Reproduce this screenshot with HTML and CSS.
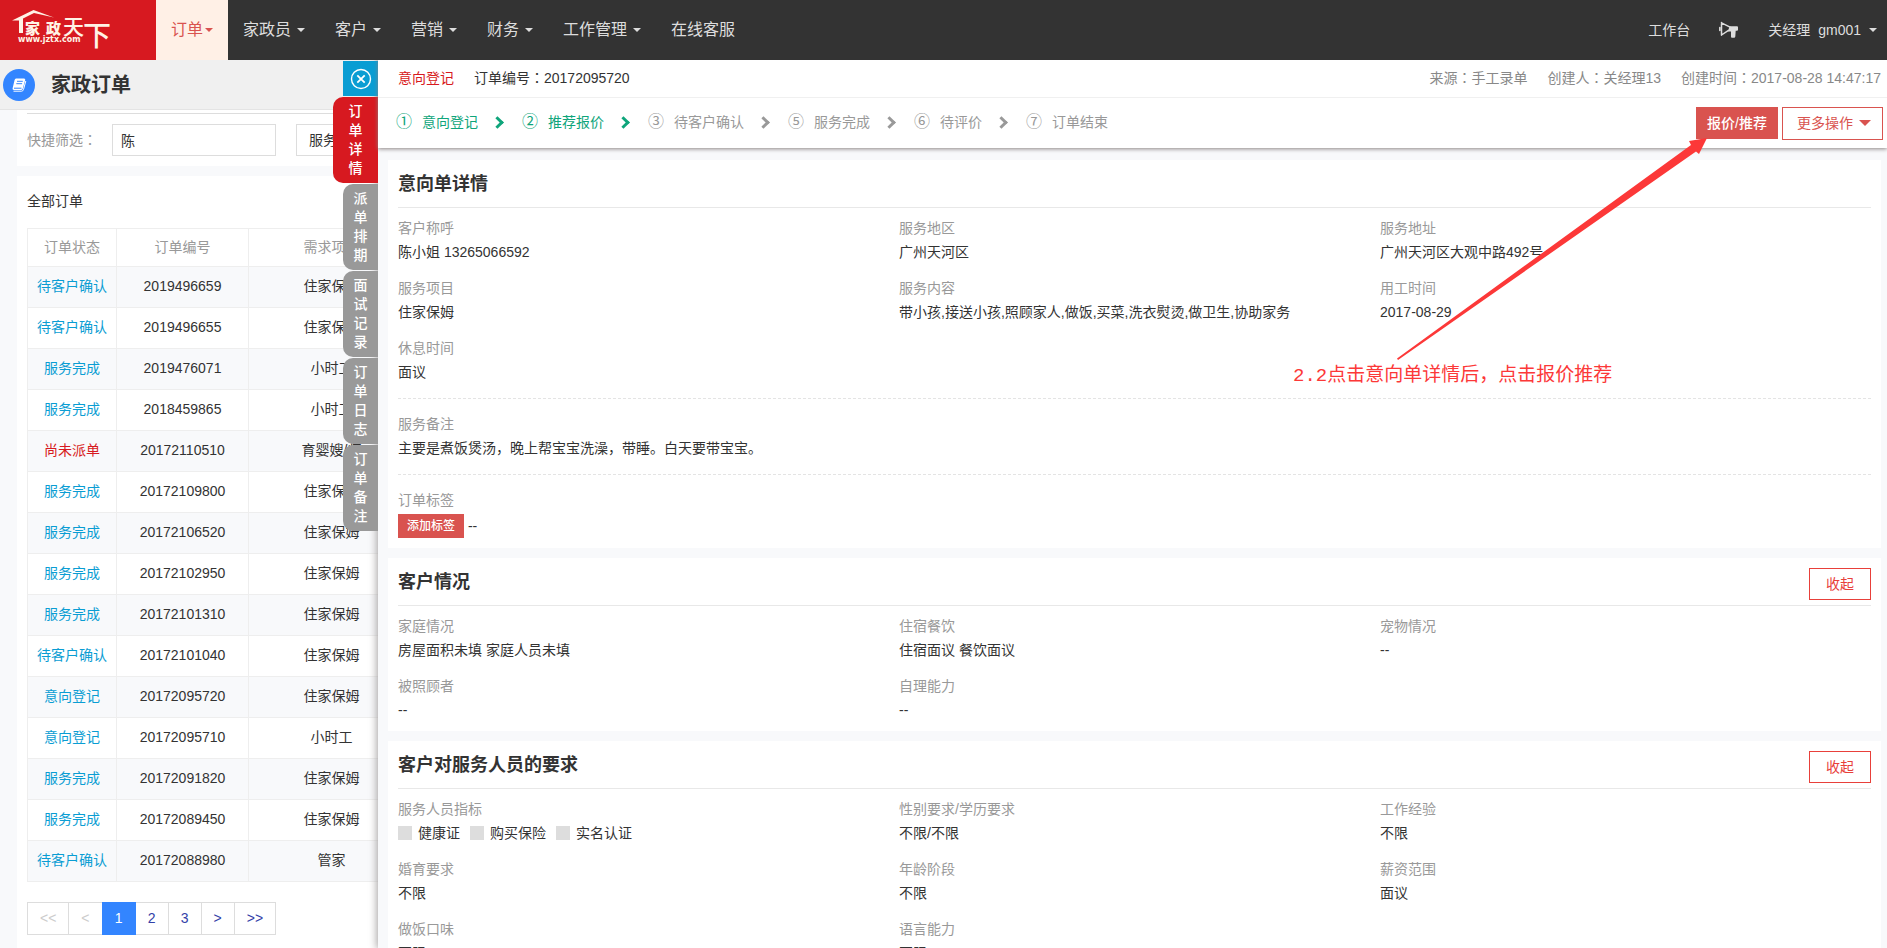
FILE: index.html
```html
<!DOCTYPE html>
<html lang="zh-CN">
<head>
<meta charset="utf-8">
<title>家政订单</title>
<link rel="stylesheet" href="styles.css">
</head>
<body>
<header class="topbar">
  <a class="logo" href="#" aria-label="家政天下">
    <svg viewBox="0 0 156 60" width="156" height="60">
      <path d="M12 20.500 33.500 10 54 17.500 34 13 23 18.500 23 33H19V20.500z" fill="#fff3e6"/>
      <text class="logo-word" x="25" y="34" font-size="15">家</text>
      <text class="logo-word" x="46" y="34" font-size="15">政</text>
      <text class="logo-brush" x="63" y="34" font-size="21">天</text>
      <text class="logo-brush" x="83" y="46" font-size="28">下</text>
      <text class="logo-url" x="18" y="42" font-size="8">www.jztx.com</text>
    </svg>
  </a>
  <nav class="menu">
    <a class="menu-item active" href="#">订单<i class="caret"></i></a>
    <a class="menu-item" href="#">家政员<i class="caret"></i></a>
    <a class="menu-item" href="#">客户<i class="caret"></i></a>
    <a class="menu-item" href="#">营销<i class="caret"></i></a>
    <a class="menu-item" href="#">财务<i class="caret"></i></a>
    <a class="menu-item" href="#">工作管理<i class="caret"></i></a>
    <a class="menu-item" href="#">在线客服</a>
  </nav>
  <div class="account">
    <a href="#">工作台</a>
    <a class="horn" href="#" aria-label="公告">
      <svg viewBox="0 0 20 18" width="20" height="18">
        <path d="M2.500 1.800 11.500 6.300M2.500 14 9.500 9.300M2.500 1.500V14.200M.8 6.500V9.500" fill="none" stroke="#ddd" stroke-width="1.500" stroke-linecap="round"/>
        <path d="M10.500 5.200H18Q19 5.200 19 6.200V8.800Q19 9.800 18 9.800H16.700L16.300 15.500Q16.200 16.700 15 16.700H13Q11.900 16.700 12 15.500V10.500H9z" fill="#ddd"/>
      </svg>
    </a>
    <a class="user" href="#"><span>关经理</span><span>gm001</span><i class="caret"></i></a>
  </div>
</header>

<div class="workspace">
  <main class="orders">
    <div class="page-title">
      <span class="page-icon">
        <svg viewBox="0 0 16 14" width="16" height="14">
          <path d="M5 .5H13Q14.600.5 14.200 2L11.800 10.500Q11.400 12 10 12H2.800Q1.200 12 1.600 10.300L3.600 2Q4 .5 5 .5z" fill="#fff"/>
          <path d="M6 3.300H11.800M5.300 5.700H11.100" stroke="#3385ff" stroke-width="1"/>
          <path d="M14.800 3 12.500 11.500Q12 13.200 10.500 13.200H2.500" fill="none" stroke="#fff" stroke-width="1"/>
          <path d="M3 10.200H10.500" stroke="#3385ff" stroke-width="1"/>
        </svg>
      </span>
      <h1>家政订单</h1>
    </div>
    <section class="panel filters">
      <form class="filter-row">
        <label for="quick">快捷筛选<span class="colon" lang="zh-Hant">：</span></label>
        <input id="quick" type="text" value="陈">
        <select aria-label="服务"><option>服务</option></select>
      </form>
    </section>
    <section class="panel list">
      <h2>全部订单</h2>
      <table>
        <colgroup><col class="c-state"><col class="c-number"><col class="c-item"></colgroup>
        <thead><tr><th>订单状态</th><th>订单编号</th><th>需求项目</th></tr></thead>
        <tbody>
          <tr><td><a href="#">待客户确认</a></td><td>2019496659</td><td>住家保姆</td></tr>
          <tr><td><a href="#">待客户确认</a></td><td>2019496655</td><td>住家保姆</td></tr>
          <tr><td><a href="#">服务完成</a></td><td>2019476071</td><td>小时工</td></tr>
          <tr><td><a href="#">服务完成</a></td><td>2018459865</td><td>小时工</td></tr>
          <tr><td><a class="alert" href="#">尚未派单</a></td><td>20172110510</td><td>育婴嫂/师</td></tr>
          <tr><td><a href="#">服务完成</a></td><td>20172109800</td><td>住家保姆</td></tr>
          <tr><td><a href="#">服务完成</a></td><td>20172106520</td><td>住家保姆</td></tr>
          <tr><td><a href="#">服务完成</a></td><td>20172102950</td><td>住家保姆</td></tr>
          <tr><td><a href="#">服务完成</a></td><td>20172101310</td><td>住家保姆</td></tr>
          <tr><td><a href="#">待客户确认</a></td><td>20172101040</td><td>住家保姆</td></tr>
          <tr><td><a href="#">意向登记</a></td><td>20172095720</td><td>住家保姆</td></tr>
          <tr><td><a href="#">意向登记</a></td><td>20172095710</td><td>小时工</td></tr>
          <tr><td><a href="#">服务完成</a></td><td>20172091820</td><td>住家保姆</td></tr>
          <tr><td><a href="#">服务完成</a></td><td>20172089450</td><td>住家保姆</td></tr>
          <tr><td><a href="#">待客户确认</a></td><td>20172088980</td><td>管家</td></tr>
        </tbody>
      </table>
      <nav class="pager" aria-label="分页">
        <a class="off" href="#">&lt;&lt;</a><a class="off" href="#">&lt;</a><a class="current" href="#">1</a><a href="#">2</a><a href="#">3</a><a href="#">&gt;</a><a href="#">&gt;&gt;</a>
      </nav>
    </section>
  </main>

  <aside class="drawer">
    <div class="side-tabs">
      <button class="close" type="button" aria-label="关闭">
        <svg viewBox="0 0 22 22" width="22" height="22" fill="none" stroke="#fff">
          <circle cx="11" cy="11" r="9.500" stroke-width="1.400"/>
          <path d="M7.300 7.300 14.700 14.700M14.700 7.300 7.300 14.700" stroke-width="1.800"/>
        </svg>
      </button>
      <button class="tab selected" type="button">订单详情</button>
      <button class="tab" type="button">派单排期</button>
      <button class="tab" type="button">面试记录</button>
      <button class="tab" type="button">订单日志</button>
      <button class="tab" type="button">订单备注</button>
    </div>

    <div class="drawer-head">
      <div class="meta">
        <span class="state">意向登记</span>
        <span class="number">订单编号<span class="colon" lang="zh-Hant">：</span>20172095720</span>
        <span class="push">来源<span class="colon" lang="zh-Hant">：</span>手工录单</span>
        <span>创建人<span class="colon" lang="zh-Hant">：</span>关经理13</span>
        <span>创建时间<span class="colon" lang="zh-Hant">：</span>2017-08-28 14:47:17</span>
      </div>
      <div class="progress">
        <ol class="steps">
          <li class="done"><span class="no">①</span>意向登记</li>
          <li class="done"><span class="no">②</span>推荐报价</li>
          <li><span class="no">③</span>待客户确认</li>
          <li><span class="no">⑤</span>服务完成</li>
          <li><span class="no">⑥</span>待评价</li>
          <li><span class="no">⑦</span>订单结束</li>
        </ol>
        <button class="btn-solid" type="button">报价/推荐</button>
        <button class="btn-line more" type="button">更多操作<i class="caret large"></i></button>
      </div>
    </div>

    <div class="drawer-body">
      <section class="card">
        <div class="card-head"><h3>意向单详情</h3></div>
        <dl class="fields">
          <div><dt>客户称呼</dt><dd>陈小姐 13265066592</dd></div>
          <div><dt>服务地区</dt><dd>广州天河区</dd></div>
          <div><dt>服务地址</dt><dd>广州天河区大观中路492号</dd></div>
          <div><dt>服务项目</dt><dd>住家保姆</dd></div>
          <div><dt>服务内容</dt><dd>带小孩,接送小孩,照顾家人,做饭,买菜,洗衣熨烫,做卫生,协助家务</dd></div>
          <div><dt>用工时间</dt><dd>2017-08-29</dd></div>
          <div><dt>休息时间</dt><dd>面议</dd></div>
        </dl>
        <dl class="fields single">
          <div><dt>服务备注</dt><dd>主要是煮饭煲汤，晚上帮宝宝洗澡，带睡。白天要带宝宝。</dd></div>
        </dl>
        <dl class="fields single">
          <div><dt>订单标签</dt><dd class="tags"><button class="btn-tag" type="button">添加标签</button> --</dd></div>
        </dl>
      </section>

      <section class="card">
        <div class="card-head"><h3>客户情况</h3><button class="btn-line fold" type="button">收起</button></div>
        <dl class="fields">
          <div><dt>家庭情况</dt><dd>房屋面积未填 家庭人员未填</dd></div>
          <div><dt>住宿餐饮</dt><dd>住宿面议 餐饮面议</dd></div>
          <div><dt>宠物情况</dt><dd>--</dd></div>
          <div><dt>被照顾者</dt><dd>--</dd></div>
          <div><dt>自理能力</dt><dd>--</dd></div>
        </dl>
      </section>

      <section class="card">
        <div class="card-head"><h3>客户对服务人员的要求</h3><button class="btn-line fold" type="button">收起</button></div>
        <dl class="fields">
          <div><dt>服务人员指标</dt><dd class="checks"><label><input type="checkbox">健康证</label><label><input type="checkbox">购买保险</label><label><input type="checkbox">实名认证</label></dd></div>
          <div><dt>性别要求/学历要求</dt><dd>不限/不限</dd></div>
          <div><dt>工作经验</dt><dd>不限</dd></div>
          <div><dt>婚育要求</dt><dd>不限</dd></div>
          <div><dt>年龄阶段</dt><dd>不限</dd></div>
          <div><dt>薪资范围</dt><dd>面议</dd></div>
          <div><dt>做饭口味</dt><dd>不限</dd></div>
          <div><dt>语言能力</dt><dd>不限</dd></div>
        </dl>
      </section>
    </div>

    <div class="callout">
      <svg viewBox="0 0 314 222" width="314" height="222" aria-hidden="true">
        <path d="M314 0 306 16 303 13.500 5 222 4 220.500 298 7 296 3z" fill="#fc3838"/>
      </svg>
      <p>2.2点击意向单详情后，点击报价推荐</p>
    </div>
  </aside>
</div>
</body>
</html>
```
FILE: styles.css
```css
*, *::before, *::after { box-sizing: border-box; }

html, body { height: 100%; }

body {
  margin: 0;
  display: flex;
  flex-direction: column;
  overflow: hidden;
  background: #f8f9fb;
  color: #333;
  font: 14px/24px "Liberation Sans", "Noto Sans CJK SC", sans-serif;
}

h1, h2, h3, p, dl, dd, ol { margin: 0; padding: 0; }
a { color: inherit; text-decoration: none; }
button, input, select { font: inherit; color: inherit; border-radius: 0; }
button { padding: 0; border: 0; cursor: pointer; }
svg { display: block; }

.colon { font-family: "Noto Sans CJK TC", sans-serif; line-height: 1; }

.caret {
  border: 4px solid transparent;
  border-top-color: currentColor;
  border-bottom: 0;
}
.caret.large { border-width: 6px; border-bottom: 0; }

/* top bar */
.topbar {
  display: flex;
  flex: none;
  height: 60px;
  background: #333;
  color: #ddd;
}
.logo { flex: none; background: #d71920; }
.logo text { fill: #fff3e6; }
.logo-word { font-weight: 900; }
.logo-brush { font-weight: 500; }
.logo-url { font-family: "DejaVu Sans", sans-serif; font-weight: 700; }
.menu { display: flex; font-size: 16px; }
.menu-item {
  display: flex;
  align-items: center;
  gap: 6px;
  padding: 0 15px;
}
.menu-item.active { gap: 2px; background: #fff0e6; color: #d9534f; }
.account {
  display: flex;
  align-items: center;
  gap: 29px;
  margin-left: auto;
  padding-right: 10px;
}
.user { display: flex; align-items: center; gap: 8px; }

/* order list behind the drawer */
.workspace { position: relative; flex: 1; min-height: 0; }
.orders { height: 100%; overflow: hidden; }
.page-title {
  display: flex;
  align-items: center;
  gap: 16px;
  height: 50px;
  padding: 0 3px;
  background: #f0f0f0;
  border-bottom: 1px solid #e4e4e4;
}
.page-title h1 { font-size: 20px; }
.page-icon {
  display: grid;
  place-items: center;
  width: 32px;
  height: 32px;
  border-radius: 50%;
  background: #3385ff;
}
.panel { margin: 0 17px 10px; padding: 0 10px; background: #fff; }
.filters { padding-top: 3px; padding-bottom: 10px; }
.filter-row {
  display: flex;
  align-items: center;
  padding-top: 10px;
  border-top: 1px solid #ddd;
}
.filter-row label { width: 85px; color: #999; }
.filter-row input {
  width: 164px;
  height: 32px;
  margin-right: 20px;
  padding: 0 8px;
  border: 1px solid #ddd;
}
.filter-row select {
  width: 120px;
  height: 32px;
  padding: 0 12px;
  border: 1px solid #ddd;
  background: #fff;
  appearance: none;
}
.list h2 { padding: 13px 0 15px; font-size: 14px; font-weight: 400; }
.list { padding-bottom: 40px; }
table { border-collapse: collapse; table-layout: fixed; width: 387px; }
.c-state { width: 89px; }
.c-number { width: 132px; }
.c-item { width: 166px; }
th, td { height: 41px; padding: 0 0 2px; border: 1px solid #eee; text-align: center; }
th { height: 38px; color: #999; font-weight: 400; }
tbody tr:nth-child(odd) { background: #f8f9fb; }
td a { color: #0a9dd3; }
td a.alert { color: #d71920; }
.pager { display: flex; padding-top: 20px; }
.pager a {
  min-width: 34px;
  margin-right: -1px;
  padding: 3px 12px 4px;
  border: 1px solid #ddd;
  color: #3341a8;
  text-align: center;
}
.pager a.off { color: #ccc; }
.pager a:first-child, .pager a:last-child { min-width: 42px; }
.pager a.current { z-index: 1; background: #3385ff; border-color: #3385ff; color: #fff; }

/* drawer */
.drawer {
  position: absolute;
  top: 0;
  right: 0;
  bottom: 0;
  left: 378px;
  display: flex;
  flex-direction: column;
  background: #f8f9fb;
  box-shadow: 0 0 8px 1px #a39f9f;
  clip-path: inset(0 0 0 -60px);
}
.side-tabs {
  position: absolute;
  top: 1px;
  right: 100%;
  display: flex;
  flex-direction: column;
  align-items: flex-end;
  gap: 1px;
}
.close {
  display: grid;
  place-items: center;
  width: 35px;
  height: 35px;
  background: #0a9dd3;
}
.tab {
  width: 35px;
  height: 86px;
  padding: 5px 10px;
  border-radius: 10px 0 0 10px;
  background: #999;
  color: #fff;
  font-weight: 500;
  line-height: 19px;
}
.tab.selected { width: 45px; padding: 5px 15px; background: #d71920; }
.drawer-head {
  position: relative;
  flex: none;
  background: #fff;
  box-shadow: 0 1px 4px #8c8484;
}
.meta {
  display: flex;
  align-items: center;
  gap: 20px;
  height: 38px;
  padding: 0 6px 2px 20px;
  border-bottom: 1px solid #f0f0f0;
  color: #888;
}
.state { color: #d71920; }
.number { color: #333; }
.push { margin-left: auto; }
.progress {
  display: flex;
  align-items: center;
  gap: 4px;
  height: 50px;
  padding: 0 4px 0 18px;
}
.steps { display: flex; flex: 1; padding-bottom: 2px; list-style: none; color: #999; }
.steps li { display: flex; align-items: center; }
.no { width: 26px; font-size: 16px; }
.steps li:not(:last-child)::after {
  content: "";
  width: 9px;
  height: 9px;
  margin: 0 20px 0 15px;
  border: solid;
  border-width: 3px 3px 0 0;
  transform: rotate(45deg);
}
.steps .done { color: #0fa57b; }
.btn-solid {
  height: 32px;
  padding: 0 11px;
  background: #d9534f;
  color: #fff;
  font-weight: 500;
}
.btn-line { border: 1px solid #e8403a; background: #fff; color: #e8403a; }
.more {
  display: flex;
  align-items: center;
  gap: 6px;
  height: 33px;
  padding: 0 11px 0 14px;
  border-color: #d9534f;
  color: #d9534f;
}

/* detail cards */
.drawer-body {
  display: flex;
  flex-direction: column;
  gap: 10px;
  min-height: 0;
  padding: 12px 6px 0 10px;
  overflow: hidden;
}
.card { flex: none; padding: 0 10px 9px; background: #fff; }
.card-head {
  display: flex;
  align-items: flex-start;
  justify-content: space-between;
  height: 48px;
  padding-top: 10px;
  border-bottom: 1px solid #e8e8e8;
}
.card-head h3 { font-size: 18px; line-height: 28px; }
.fold { width: 62px; height: 32px; }
.fields {
  display: grid;
  grid-template-columns: 501fr 481fr 491fr;
  row-gap: 12px;
  padding-top: 8px;
}
.fields.single {
  grid-template-columns: 1fr;
  margin-top: 14px;
  padding-top: 13px;
  border-top: 1px dashed #e4e4e4;
}
dt { color: #999; }
.tags { padding: 2px 0 1px; }
.btn-tag {
  height: 24px;
  padding: 0 9px;
  background: #d9534f;
  color: #fff;
  font-size: 12px;
  font-weight: 500;
  vertical-align: top;
}
.checks { display: flex; gap: 10px; }
.checks label { display: flex; align-items: center; gap: 6px; }
.checks input {
  width: 14px;
  height: 14px;
  margin: 0;
  appearance: none;
  background: #ddd;
}

/* annotation lying over the drawer */
.callout {
  position: absolute;
  top: 78px;
  right: 180px;
  width: 314px;
  color: #fc3838;
}
.callout p {
  width: max-content;
  margin-left: -100px;
  font: 19px/32px "Liberation Mono", "Noto Sans CJK SC", monospace;
}
```
